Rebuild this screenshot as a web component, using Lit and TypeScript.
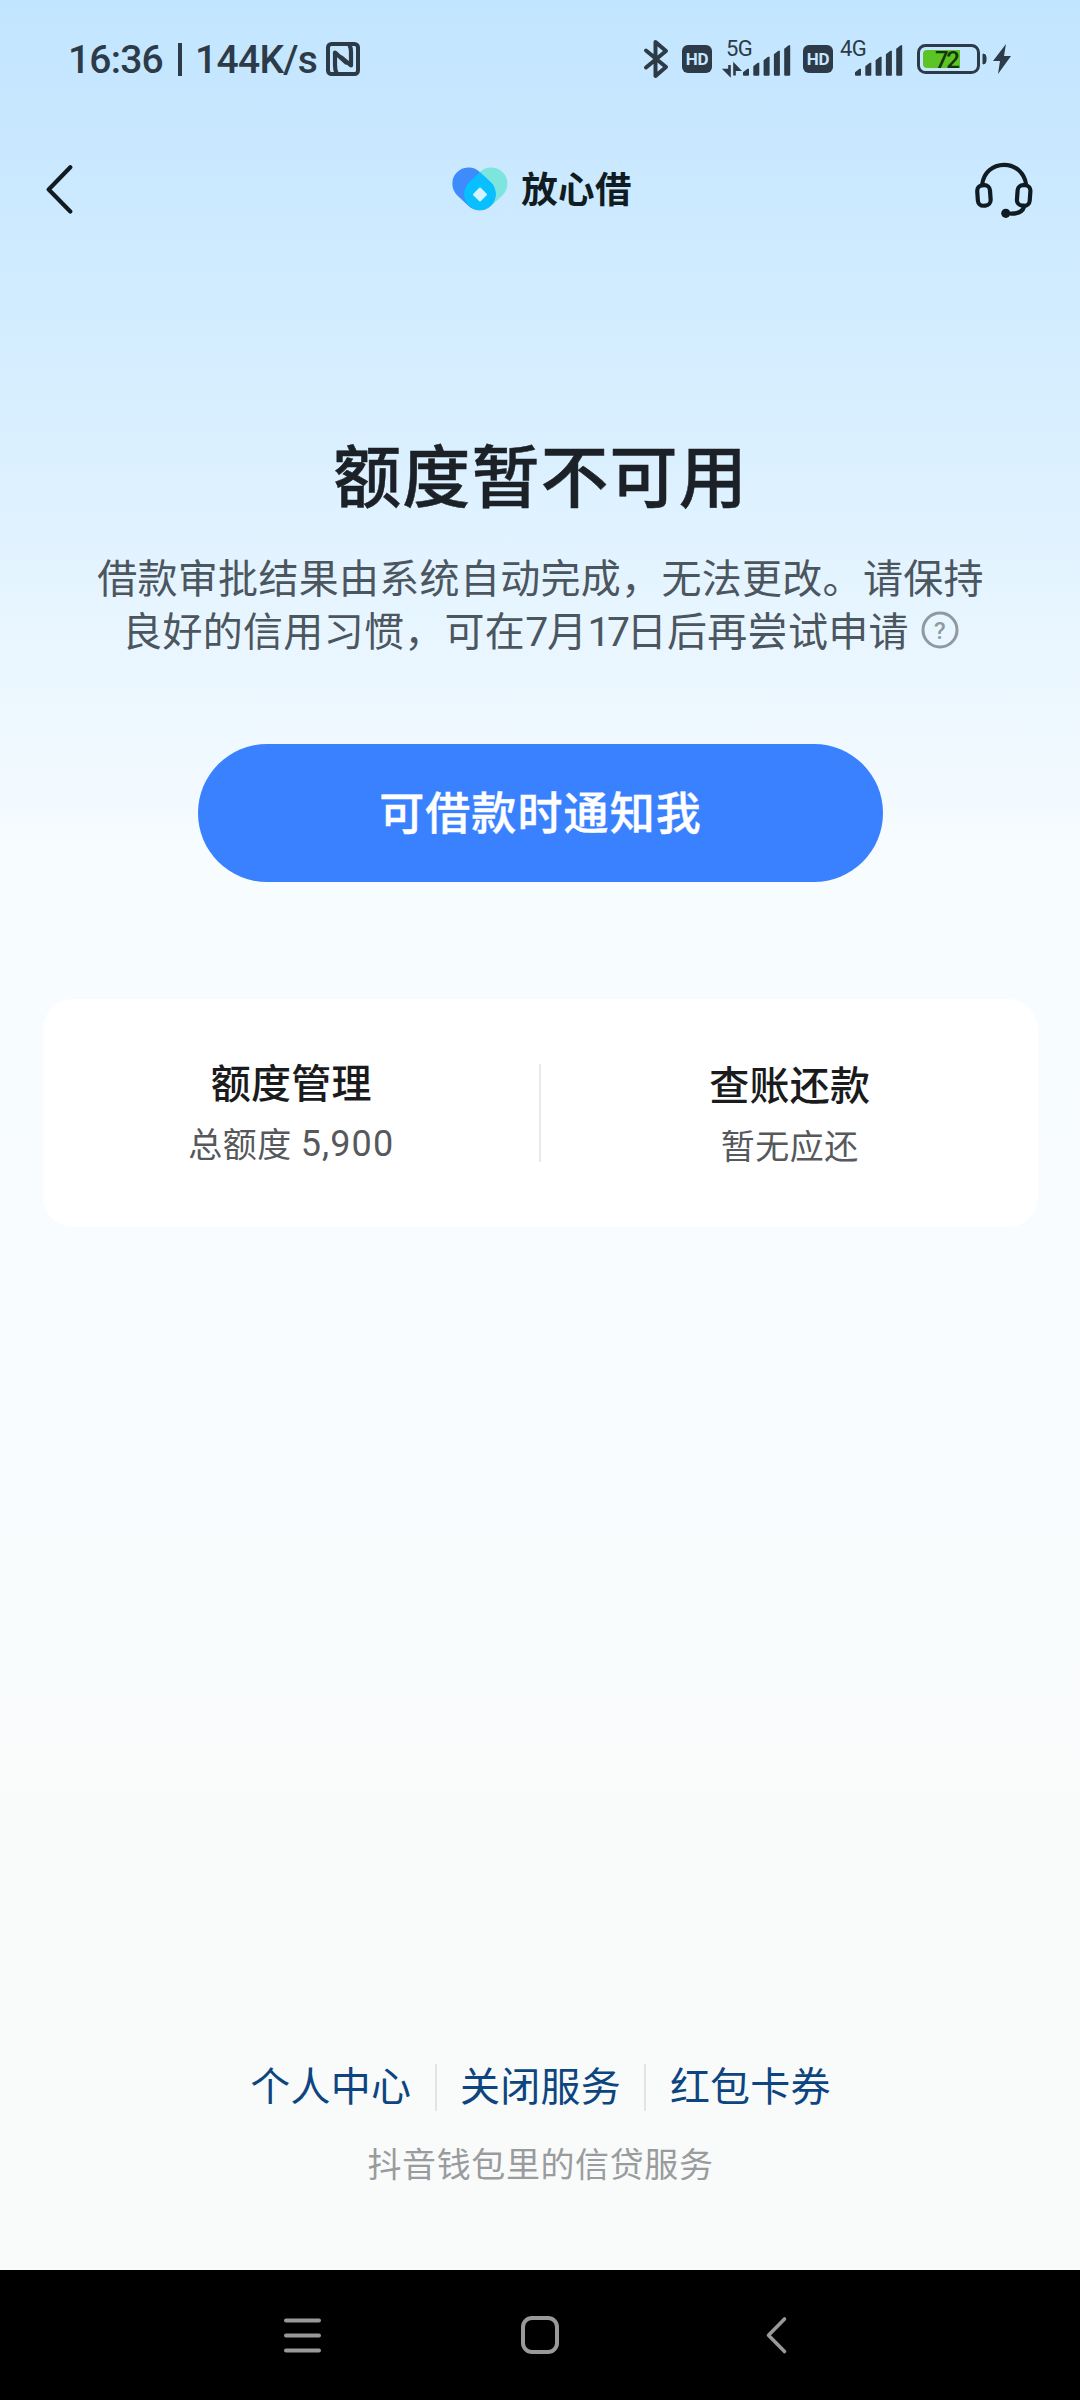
import { LitElement, html, css, svg } from "lit";
import { customElement, property } from "lit/decorators.js";

const BARS = [7, 13, 19, 25, 30.5];

@customElement("signal-bars")
class SignalBars extends LitElement {
  @property() label = "";
  @property({ type: Boolean }) arrows = false;

  static styles = css`
    :host { display: block; height: 40px; }
    .svg { display: block; overflow: visible; }
    .net { font: 400 22px Roboto, "Liberation Sans", sans-serif; fill: #2c3b47; letter-spacing: -0.6px; }
  `;

  render() {
    const x0 = this.arrows ? 18 : 16;
    return html`<svg class="svg" width="67" height="40" viewBox="0 0 67 40">
      <text class="net" x="1" y="17">${this.label}</text>
      ${this.arrows
        ? svg`<path d="M4.500 26v9.500l-4.500-4.500h4.500M9.500 36.500v-10.500l4.500 4.800h-4.500" fill="#2c3b47" stroke="#2c3b47" stroke-width="2.600"/>`
        : null}
      ${BARS.map((h, i) => {
        const x = x0 + i * 10.3;
        const t = 36.7 - h;
        return svg`<path d="M${x} 35.700V${t + 3.5}L${x + 4.500} ${t}H${x + 6}V35.700a1 1 0 0 1-1 1H${x + 1}a1 1 0 0 1-1-1z" fill="#2c3b47"/>`;
      })}
    </svg>`;
  }
}

@customElement("status-bar")
class StatusBar extends LitElement {
  static styles = css`
    :host {
      display: flex; height: 118px; box-sizing: border-box; padding: 38px 69px 0 68px;
      justify-content: space-between; align-items: flex-start; color: #2c3b47;
    }
    .left, .right { display: flex; align-items: center; height: 42px; }
    .text {
      display: flex; align-items: center; white-space: pre; padding-top: 1px;
      font: 500 39px/42px Roboto, "Liberation Sans", sans-serif;
    }
    .clock { width: 97px; letter-spacing: -0.8px; }
    .bar { width: 4px; height: 33px; background: #2c3b47; margin: 0 13px 0 13px; }
    .speed { width: 131px; letter-spacing: -0.7px; }
    .icon { display: block; overflow: visible; }
    .hd {
      width: 30px; height: 28px; border-radius: 6px; background: #2c3b47; color: #c8e7ff;
      font: 700 17px/28px Roboto, sans-serif; letter-spacing: -0.4px; text-align: center;
    }
    .hd1 { margin: 0 13px 0 14px; }
    .hd2 { margin: 0 6px 0 11px; }
    .pct { font: 500 24px Roboto, sans-serif; fill: #16340c; }
    .battery { margin-left: 11px; }
    .bolt { margin-left: 6px; }
  `;

  render() {
    return html`
      <div class="left">
        <div class="text"><span class="clock">16:36</span><span class="bar"></span><span class="speed">144K/s</span></div>
        <svg class="icon" width="34" height="34" viewBox="0 0 34 34" fill="none" stroke="#2c3b47">
          <rect x="2" y="2" width="30" height="30" rx="3.500" stroke-width="4"/>
          <path d="M10.500 31q-1.500-3-1.500-8V10.500l11 10M23.500 3q1.500 3 1.500 7v13.500L15.500 15.500" stroke-width="4.200" stroke-linejoin="round" stroke-linecap="round"/>
        </svg>
      </div>
      <div class="right">
        <svg class="icon" width="24" height="38" viewBox="0 0 24 38" fill="none" stroke="#2c3b47" stroke-width="4" stroke-linecap="round" stroke-linejoin="round">
          <path d="M2 10.500L22 27 11.500 36V2L22 11 2 27.500"/>
        </svg>
        <span class="hd hd1">HD</span>
        <signal-bars label="5G" arrows></signal-bars>
        <span class="hd hd2">HD</span>
        <signal-bars label="4G"></signal-bars>
        <svg class="icon battery" width="70" height="30" viewBox="0 0 70 30">
          <rect x="1.500" y="1.500" width="60" height="27" rx="7" fill="none" stroke="#2c3b47" stroke-width="3"/>
          <path d="M66 10q3 0 3 3v4q0 3-3 3z" fill="#2c3b47" stroke="#2c3b47"/>
          <path d="M10 6H43V24H10a4 4 0 0 1-4-4V10a4 4 0 0 1 4-4z" fill="#5cc425"/>
          <text class="pct" x="18" y="24" textLength="25">72</text>
        </svg>
        <svg class="icon bolt" width="18" height="30" viewBox="0 0 18 30">
          <path d="M13 0L0 17h7L5 30 18 12h-7z" fill="#2c3b47"/>
        </svg>
      </div>
    `;
  }
}

@customElement("app-header")
class AppHeader extends LitElement {
  static styles = css`
    :host {
      display: grid; grid-template-columns: 1fr auto 1fr; align-items: center; height: 142px;
      box-sizing: border-box; padding: 0 46px;
    }
    .icon { display: block; }
    .brand { display: flex; align-items: center; gap: 13px; padding-left: 4px; }
    .name {
      font: 700 36.500px/44px "Noto Sans CJK SC", sans-serif; color: #101b22; letter-spacing: 0.300px;
      padding-bottom: 3px;
    }
    .help { justify-self: end; }
  `;

  render() {
    return html`
      <svg class="icon" width="28" height="50" viewBox="46 164 28 50" fill="none" stroke="#101b22" stroke-width="4.200" stroke-linecap="round" stroke-linejoin="round">
        <path d="M70.300 167.200L48.700 189.500l21.600 22"/>
      </svg>
      <div class="brand">
        <svg class="icon" width="56" height="44" viewBox="452.500 167.500 56 44">
          <defs>
            <clipPath id="pill">
              <rect x="-16.200" y="-16.200" width="47.500" height="32.400" rx="16.200" transform="translate(469 184.200) rotate(43.500)"/>
            </clipPath>
          </defs>
          <rect x="-16.200" y="-16.200" width="47.500" height="32.400" rx="16.200" transform="translate(491.700 184.200) rotate(136.500)" fill="#7be5de"/>
          <rect x="-16.200" y="-16.200" width="47.500" height="32.400" rx="16.200" transform="translate(469 184.200) rotate(43.500)" fill="#3e8bfb"/>
          <g clip-path="url(#pill)">
            <rect x="-16.200" y="-16.200" width="47.500" height="32.400" rx="16.200" transform="translate(491.700 184.200) rotate(136.500)" fill="#08bfff"/>
          </g>
          <rect x="-5.200" y="-5.200" width="10.400" height="10.400" rx="1" transform="translate(480.500 195) rotate(45)" fill="#d3f4ff"/>
        </svg>
        <span class="name">放心借</span>
      </div>
      <svg class="icon help" width="60" height="58" viewBox="974 161 60 58" fill="none" stroke="#101b22" stroke-width="4.200" stroke-linecap="round">
        <path d="M982.300 185C983.500 174 992.500 165.800 1004 165.800s20.500 8.200 22 19.200"/>
        <rect x="977.500" y="186.200" width="12.800" height="20.500" rx="5.500" transform="rotate(-4 984 196)"/>
        <rect x="1017.300" y="186.200" width="12.800" height="20.500" rx="5.500" transform="rotate(4 1024 196)"/>
        <path d="M1024 208c-1.500 4.500-6 6.700-13 6.700"/>
        <circle cx="1005.800" cy="214.300" r="4.600" fill="#101b22" stroke="none"/>
      </svg>
    `;
  }
}

@customElement("app-root")
class AppRoot extends LitElement {
  static styles = css`
    :host {
      display: flex; flex-direction: column; width: 1080px; height: 2400px; overflow: hidden;
      font-family: "Noto Sans CJK SC", sans-serif;
      background: linear-gradient(180deg, #c2e5ff 0, #cbe9ff 190px, #dbf0ff 460px, #e9f6ff 640px, #f7fcff 870px, #f8fcff 1240px, #f9fbfb 1800px, #f9fbfa 2270px);
    }
    .main { flex: 1; display: flex; flex-direction: column; align-items: center; }
    .title {
      margin: 163px 0 0; padding-left: 1px; font-size: 68px; line-height: 100px; font-weight: 500; letter-spacing: 1.100px;
      color: #1b2126; -webkit-text-stroke: 0.500px #1b2126;
    }
    .desc {
      margin: 30px 0 0; padding-left: 1px; font: 400 40px/53px Roboto, "Noto Sans CJK SC", sans-serif; letter-spacing: 0.3px;
      color: #4c565f; text-align: center;
    }
    .line { display: flex; justify-content: center; align-items: center; white-space: nowrap; height: 53px; }
    .seven { font-size: 41px; letter-spacing: -1.100px; }
    .seventeen { font-size: 41px; letter-spacing: -3.400px; }
    .q { display: block; margin: -6px 0 0 12px; }
    .mark { font: 500 24px Roboto, sans-serif; fill: #8f99a3; }
    .cta {
      margin-top: 85px; width: 685px; height: 138px; border: 0; border-radius: 69px; padding: 0 0 5px 1px;
      background: #3a81ff; color: #fff; font: 500 45px/60px "Noto Sans CJK SC", sans-serif; letter-spacing: 1.100px;
      -webkit-text-stroke: 0.400px #fff;
    }
    .card {
      margin-top: 117px; width: 995px; height: 228px; border-radius: 30px; background: #fff;
      display: grid; grid-template-columns: 1fr 2px 1fr; align-items: center;
    }
    .rule { height: 98px; background: #e8e9ec; }
    .cell { display: flex; flex-direction: column; align-items: center; gap: 7px; padding: 0 0 2px 1px; }
    .head { font-size: 40px; line-height: 58px; font-weight: 500; color: #1a1b1d; letter-spacing: 0.200px; }
    .sub { font-size: 34px; line-height: 52px; color: #56585c; letter-spacing: 0.500px; display: flex; gap: 9px; }
    .amount { font: 400 36px/55px Roboto, sans-serif; letter-spacing: 1.100px; }
    .links { margin-top: auto; display: flex; align-items: center; gap: 23.500px; padding-left: 1px; }
    .link { font-size: 40px; line-height: 58px; letter-spacing: 0.200px; color: #0d4580; padding-bottom: 7px; }
    .sep { width: 2px; height: 47px; background: #e1e4e6; }
    .foot { margin: 17px 0 81px; padding-left: 1px; font-size: 34px; line-height: 52px; letter-spacing: 0.600px; color: #999b9e; }
    .nav {
      height: 130px; background: #000; display: flex; justify-content: center; align-items: center; gap: 198px;
      padding-right: 1px; box-sizing: border-box;
    }
    .nav-icon { display: block; }
  `;

  render() {
    return html`
      <status-bar></status-bar>
      <app-header></app-header>
      <div class="main">
        <h1 class="title">额度暂不可用</h1>
        <div class="desc">
          <div class="line">借款审批结果由系统自动完成，无法更改。请保持</div>
          <div class="line">
            <span>良好的信用习惯，可在<span class="seven">7</span>月<span class="seventeen">17</span>日后再尝试申请</span>
            <svg class="q" width="38" height="38" viewBox="0 0 38 38">
              <circle cx="19" cy="19" r="17" fill="none" stroke="#8f99a3" stroke-width="3"/>
              <text class="mark" x="19" y="27.500" text-anchor="middle">?</text>
            </svg>
          </div>
        </div>
        <button class="cta">可借款时通知我</button>
        <div class="card">
          <div class="cell"><div class="head">额度管理</div><div class="sub"><span>总额度</span><span class="amount">5,900</span></div></div>
          <div class="rule"></div>
          <div class="cell"><div class="head">查账还款</div><div class="sub">暂无应还</div></div>
        </div>
        <div class="links">
          <span class="link">个人中心</span><span class="sep"></span><span class="link">关闭服务</span><span class="sep"></span><span class="link">红包卡券</span>
        </div>
        <div class="foot">抖音钱包里的信贷服务</div>
      </div>
      <div class="nav">
        <svg class="nav-icon" width="40" height="40" viewBox="0 0 40 40" stroke="#999" stroke-width="4" stroke-linecap="round">
          <path d="M4 5.500h33M4 20.500h33M4 35.500h33"/>
        </svg>
        <svg class="nav-icon" width="40" height="40" viewBox="0 0 40 40" fill="none" stroke="#999" stroke-width="4">
          <rect x="3" y="3" width="34" height="34" rx="9"/>
        </svg>
        <svg class="nav-icon" width="40" height="40" viewBox="0 0 40 40" fill="none" stroke="#999" stroke-width="3.600" stroke-linecap="round" stroke-linejoin="round">
          <path d="M26.500 4L10.500 20.300 26.500 36.500"/>
        </svg>
      </div>
    `;
  }
}
